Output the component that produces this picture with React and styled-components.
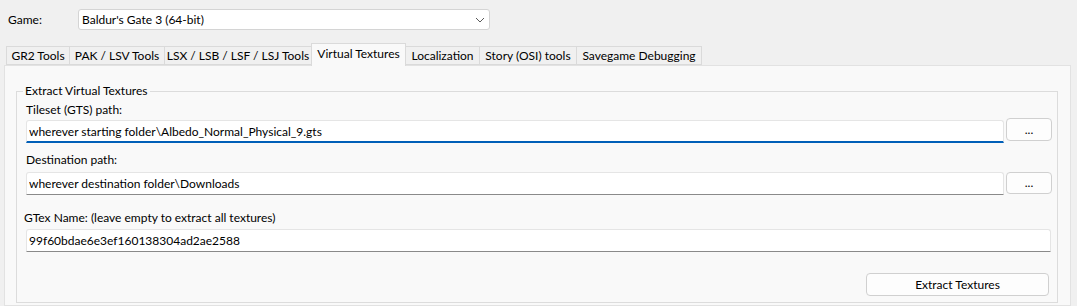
import React from 'react';
import styled, { createGlobalStyle } from 'styled-components';

const Global = createGlobalStyle`
  html, body { margin: 0; padding: 0; background: #f0f0f0; }
  body { font-family: Lato, "Noto Sans", sans-serif; font-size: 12px; color: #000; }
  * { box-sizing: border-box; }
`;

const Window = styled.div`
  width: 1077px;
  height: 306px;
  overflow: hidden;
  background: #f0f0f0;
  display: flex;
  flex-direction: column;
`;

const TopRow = styled.div`
  display: flex;
  align-items: center;
  margin-top: 9px;
  padding-left: 8px;
  height: 21px;
`;

const GameLabel = styled.span`
  width: 70px;
  line-height: 16px;
`;

const Combo = styled.div`
  width: 412px;
  height: 21px;
  background: #fff;
  border: 1px solid #d4d4d4;
  border-radius: 3px;
  display: flex;
  align-items: center;
  justify-content: space-between;
  padding: 0 4px 0 3px;
`;

const TabStrip = styled.div`
  display: flex;
  align-items: flex-end;
  margin-top: 13px;
  padding-left: 6px;
  height: 22px;
  position: relative;
  z-index: 1;
`;

const Tab = styled.div`
  width: ${p => p.$w}px;
  height: ${p => (p.$active ? 23 : 19)}px;
  margin-bottom: ${p => (p.$active ? -1 : 0)}px;
  margin-right: -1px;
  background: ${p => (p.$active ? '#f9f9f9' : '#f0f0f0')};
  border: 1px solid #dadada;
  border-bottom: ${p => (p.$active ? 'none' : '1px solid #dadada')};
  display: flex;
  align-items: ${p => (p.$active ? 'flex-start' : 'center')};
  padding-top: ${p => (p.$active ? 2 : 0)}px;
  justify-content: center;
  white-space: nowrap;
  line-height: 16px;
  position: relative;
  z-index: ${p => (p.$active ? 2 : 1)};
`;

const Panel = styled.div`
  margin-left: 4px;
  width: 1067px;
  flex: 1;
  background: #f9f9f9;
  border: 1px solid #e2e2e2;
  padding: 17px 12px 0 11px;
`;

const Group = styled.fieldset`
  margin: 0;
  width: 1042px;
  border: 1px solid #dcdcdc;
  padding: 0 5px 6px 9px;
`;

const Legend = styled.legend`
  padding: 0 2px;
  margin-left: -3px;
  line-height: 16px;
`;

const Body = styled.div`
  display: flex;
  flex-direction: column;
`;

const Label = styled.div`
  line-height: 16px;
  margin-top: ${p => p.$mt}px;
  margin-left: ${p => p.$ml || 0}px;
`;

const Row = styled.div`
  display: flex;
  align-items: flex-start;
  gap: 2px;
  margin-top: ${p => p.$mt}px;
`;

const TextBox = styled.input`
  flex: 1;
  height: 23px;
  margin: ${p => p.$mt || 0}px ${p => p.$mr || 0}px 0 0;
  background: #fff;
  border: 1px solid #e5e5e5;
  border-bottom: ${p => (p.$focused ? '2px solid #005fb8' : '1px solid #8a8a8a')};
  border-radius: 3px 3px 0 0;
  padding: 0 2px;
  font: inherit;
  color: #000;
  outline: none;
`;

const Button = styled.button`
  width: ${p => p.$w}px;
  height: ${p => p.$h || 23}px;
  background: #fdfdfd;
  border: 1px solid #d0d0d0;
  border-radius: 4px;
  font: inherit;
  color: #000;
  padding: 0;
  display: flex;
  align-items: center;
  justify-content: center;
  line-height: 16px;
`;

const Footer = styled.div`
  display: flex;
  justify-content: flex-end;
  margin-top: 21px;
  padding-right: 3px;
`;

const Chevron = () => (
  <svg width="10" height="6" viewBox="0 0 10 6">
    <polyline points="1,1 5,5 9,1" fill="none" stroke="#5a5a5a" strokeWidth="1" />
  </svg>
);

const tabs = [
  { label: 'GR2 Tools', w: 64 },
  { label: 'PAK / LSV Tools', w: 96 },
  { label: 'LSX / LSB / LSF / LSJ Tools', w: 148 },
  { label: 'Virtual Textures', w: 95, active: true },
  { label: 'Localization', w: 75 },
  { label: 'Story (OSI) tools', w: 98 },
  { label: 'Savegame Debugging', w: 126 },
];

export default function App() {
  return (
    <Window>
      <Global />
      <TopRow>
        <GameLabel>Game:</GameLabel>
        <Combo>
          <span>Baldur's Gate 3 (64-bit)</span>
          <Chevron />
        </Combo>
      </TopRow>
      <TabStrip>
        {tabs.map(t => (
          <Tab key={t.label} $w={t.w} $active={t.active}>{t.label}</Tab>
        ))}
      </TabStrip>
      <Panel>
        <Group>
          <Legend>Extract Virtual Textures</Legend>
          <Body>
            <Label $mt={3}>Tileset (GTS) path:</Label>
            <Row $mt={0}>
              <TextBox $mt={2} $focused readOnly defaultValue={'wherever starting folder\\Albedo_Normal_Physical_9.gts'} />
              <Button $w={46} type="button">...</Button>
            </Row>
            <Label $mt={9}>Destination path:</Label>
            <Row $mt={4}>
              <TextBox readOnly defaultValue={'wherever destination folder\\Downloads'} />
              <Button $w={46} $h={22} type="button">...</Button>
            </Row>
            <Label $mt={15} $ml={-2}>GTex Name: (leave empty to extract all textures)</Label>
            <Row $mt={3}>
              <TextBox $mr={1} readOnly defaultValue="99f60bdae6e3ef160138304ad2ae2588" />
            </Row>
            <Footer>
              <Button $w={183} type="button">Extract Textures</Button>
            </Footer>
          </Body>
        </Group>
      </Panel>
    </Window>
  );
}
